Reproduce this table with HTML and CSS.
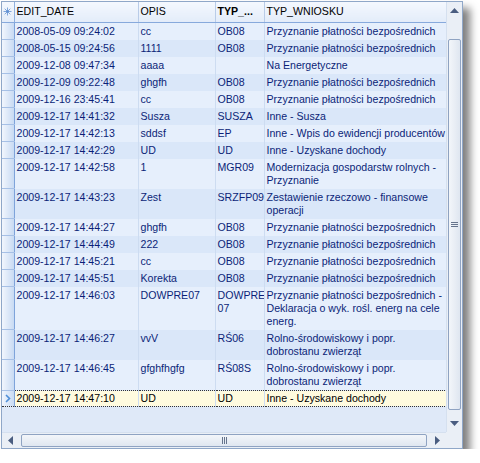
FILE: index.html
```html
<!DOCTYPE html>
<html>
<head>
<meta charset="utf-8">
<link rel="stylesheet" href="styles.css">
</head>
<body>
<div class="grid">
  <div class="viewport">
    <table class="data">
      <colgroup>
        <col class="c-ind"><col class="c-date"><col class="c-opis"><col class="c-typ"><col class="c-wn">
      </colgroup>
      <thead>
        <tr>
          <th class="ind"><svg width="9" height="9" viewBox="0 0 9 9"><g stroke="#7fa6dc" stroke-width="1"><path d="M4.5 0.5v8M0.5 4.5h8M1.7 1.7l5.6 5.6M7.3 1.7l-5.6 5.6"/></g><rect x="3.5" y="3.5" width="2" height="2" fill="#5b8bd0"/></svg></th>
          <th>EDIT_DATE</th>
          <th>OPIS</th>
          <th class="bold">TYP_...</th>
          <th>TYP_WNIOSKU</th>
        </tr>
      </thead>
      <tbody>
        <tr class="odd"><td class="ind"></td><td>2008-05-09 09:24:02</td><td>cc</td><td>OB08</td><td>Przyznanie płatności bezpośrednich</td></tr>
        <tr class="even"><td class="ind"></td><td>2008-05-15 09:24:56</td><td>1111</td><td>OB08</td><td>Przyznanie płatności bezpośrednich</td></tr>
        <tr class="odd"><td class="ind"></td><td>2009-12-08 09:47:34</td><td>aaaa</td><td></td><td>Na Energetyczne</td></tr>
        <tr class="even"><td class="ind"></td><td>2009-12-09 09:22:48</td><td>ghgfh</td><td>OB08</td><td>Przyznanie płatności bezpośrednich</td></tr>
        <tr class="odd"><td class="ind"></td><td>2009-12-16 23:45:41</td><td>cc</td><td>OB08</td><td>Przyznanie płatności bezpośrednich</td></tr>
        <tr class="even"><td class="ind"></td><td>2009-12-17 14:41:32</td><td>Susza</td><td>SUSZA</td><td>Inne - Susza</td></tr>
        <tr class="odd"><td class="ind"></td><td>2009-12-17 14:42:13</td><td>sddsf</td><td>EP</td><td>Inne - Wpis do ewidencji producentów</td></tr>
        <tr class="even"><td class="ind"></td><td>2009-12-17 14:42:29</td><td>UD</td><td>UD</td><td>Inne - Uzyskane dochody</td></tr>
        <tr class="odd"><td class="ind"></td><td>2009-12-17 14:42:58</td><td>1</td><td>MGR09</td><td>Modernizacja gospodarstw rolnych -<br>Przyznanie</td></tr>
        <tr class="even"><td class="ind"></td><td>2009-12-17 14:43:23</td><td>Zest</td><td>SRZFP09</td><td>Zestawienie rzeczowo - finansowe<br>operacji</td></tr>
        <tr class="odd"><td class="ind"></td><td>2009-12-17 14:44:27</td><td>ghgfh</td><td>OB08</td><td>Przyznanie płatności bezpośrednich</td></tr>
        <tr class="even"><td class="ind"></td><td>2009-12-17 14:44:49</td><td>222</td><td>OB08</td><td>Przyznanie płatności bezpośrednich</td></tr>
        <tr class="odd"><td class="ind"></td><td>2009-12-17 14:45:21</td><td>cc</td><td>OB08</td><td>Przyznanie płatności bezpośrednich</td></tr>
        <tr class="even"><td class="ind"></td><td>2009-12-17 14:45:51</td><td>Korekta</td><td>OB08</td><td>Przyznanie płatności bezpośrednich</td></tr>
        <tr class="odd"><td class="ind"></td><td>2009-12-17 14:46:03</td><td>DOWPRE07</td><td>DOWPRE<br>07</td><td>Przyznanie płatności bezpośrednich -<br>Deklaracja o wyk. rośl. energ na cele<br>energ.</td></tr>
        <tr class="even"><td class="ind"></td><td>2009-12-17 14:46:27</td><td>vvV</td><td>RŚ06</td><td>Rolno-środowiskowy i popr.<br>dobrostanu zwierząt</td></tr>
        <tr class="odd"><td class="ind"></td><td>2009-12-17 14:46:45</td><td>gfghfhgfg</td><td>RŚ08S</td><td>Rolno-środowiskowy i popr.<br>dobrostanu zwierząt</td></tr>
        <tr class="sel"><td class="ind"><svg width="6" height="9" viewBox="0 0 6 9"><path d="M1 1l3.5 3.5L1 8" fill="none" stroke="#4f8fd8" stroke-width="1.6"/></svg></td><td>2009-12-17 14:47:10</td><td>UD</td><td>UD</td><td>Inne - Uzyskane dochody</td></tr>
      </tbody>
    </table>
  </div>
  <div class="vscroll">
    <div class="arrow"><svg width="9" height="5" viewBox="0 0 9 5"><path d="M0 5L4.5 0L9 5Z" fill="#4a5d80"/></svg></div>
    <div class="vtrack"><div class="vthumb"><span class="grip-h"></span></div></div>
    <div class="arrow"><svg width="9" height="5" viewBox="0 0 9 5"><path d="M0 0L4.5 5L9 0Z" fill="#4a5d80"/></svg></div>
  </div>
  <div class="hscroll">
    <div class="harrow"><svg width="5" height="9" viewBox="0 0 5 9"><path d="M5 0L0 4.5L5 9Z" fill="#4a5d80"/></svg></div>
    <div class="htrack"><div class="hthumb"><span class="grip-v"></span></div></div>
    <div class="harrow"><svg width="5" height="9" viewBox="0 0 5 9"><path d="M0 0L5 4.5L0 9Z" fill="#4a5d80"/></svg></div>
  </div>
  <div class="corner"></div>
</div>
</body>
</html>
```
FILE: styles.css
```css
html, body {
  margin: 0;
  padding: 0;
  background: #ffffff;
}
body {
  padding: 1px 0 0 1px;
  font-family: "Liberation Sans", Arial, sans-serif;
  font-size: 10.6px;
}
.grid {
  width: 462px;
  height: 448px;
  box-sizing: border-box;
  border: 1px solid #8fa7c8;
  display: grid;
  grid-template-columns: 1fr 16px;
  grid-template-rows: 1fr 16px;
  background: #dfe9f8;
  box-shadow: 7px 7px 8px rgba(0, 0, 0, 0.5);
}
.viewport {
  overflow: hidden;
  background: #dfe9f8;
}
.data {
  border-collapse: collapse;
  table-layout: fixed;
  width: 445px;
}
.c-ind { width: 12px; }
.c-date { width: 124px; }
.c-opis { width: 77px; }
.c-typ { width: 49px; }
.c-wn { width: 183px; }
th {
  height: 20px;
  box-sizing: border-box;
  padding: 0 2px;
  text-align: left;
  font-weight: normal;
  color: #000000;
  font-size: 10.6px;
  line-height: 13px;
  background: linear-gradient(#f4f8fe, #e3ecf9);
  border-right: 1px solid #b9cce8;
  border-bottom: 1px solid #87a9dc;
  white-space: nowrap;
  overflow: hidden;
}
th.bold { font-weight: bold; }
th.ind {
  padding: 0;
  text-align: center;
  border-right: 1px solid #8fb0df;
}
th.ind svg { display: block; margin: 0 auto; }
td {
  padding: 2px 1px 2px 2px;
  line-height: 13px;
  vertical-align: top;
  color: #0b1f78;
  border-right: 1px solid #cddcf1;
  overflow: hidden;
  white-space: nowrap;
}
tr.odd td { background: #e6effc; }
tr.even td { background: #dae7f9; }
td.ind {
  padding: 0;
  background: linear-gradient(90deg, #f2f6fd, #c8daf3) !important;
  border-right: 1px solid #7ea3da;
  border-bottom: 1px solid #a6c0e6;
  vertical-align: middle;
  text-align: center;
}
td.ind svg { display: block; margin: 0 auto; }
tr.sel td {
  background: #fffbdf;
  color: #000000;
  border-top: 1px dotted #333;
  border-bottom: 1px dotted #333;
  padding-top: 1px;
  padding-bottom: 1px;
}
tr.sel td.ind { border-top: 1px solid #a6c0e6; }
.vscroll {
  grid-column: 2;
  grid-row: 1;
  display: flex;
  flex-direction: column;
  background: #eaeff6;
  border-left: 1px solid #d5e0ef;
}
.arrow {
  height: 17px;
  display: flex;
  align-items: center;
  justify-content: center;
}
.vtrack {
  flex: 1;
  padding: 20px 1px 5px;
  display: flex;
}
.vthumb {
  flex: 1;
  border: 1px solid #8fa3c2;
  border-radius: 2px;
  background: linear-gradient(90deg, #f3f6fa, #dfe6f0);
  display: flex;
  align-items: center;
  justify-content: center;
}
.grip-h {
  width: 7px;
  height: 5px;
  background: repeating-linear-gradient(#66748c 0 1px, transparent 1px 2px);
}
.hscroll {
  grid-column: 1;
  grid-row: 2;
  display: flex;
  background: #eaeff6;
  border-top: 1px solid #d5e0ef;
}
.harrow {
  width: 17px;
  display: flex;
  align-items: center;
  justify-content: center;
}
.htrack {
  flex: 1;
  padding: 1px 2px;
  display: flex;
}
.hthumb {
  flex: 1;
  border: 1px solid #8fa3c2;
  border-radius: 2px;
  background: linear-gradient(#f3f6fa, #dfe6f0);
  display: flex;
  align-items: center;
  justify-content: center;
}
.grip-v {
  width: 5px;
  height: 7px;
  background: repeating-linear-gradient(90deg, #66748c 0 1px, transparent 1px 2px);
}
.corner {
  grid-column: 2;
  grid-row: 2;
  background: #eaeff6;
}
```
